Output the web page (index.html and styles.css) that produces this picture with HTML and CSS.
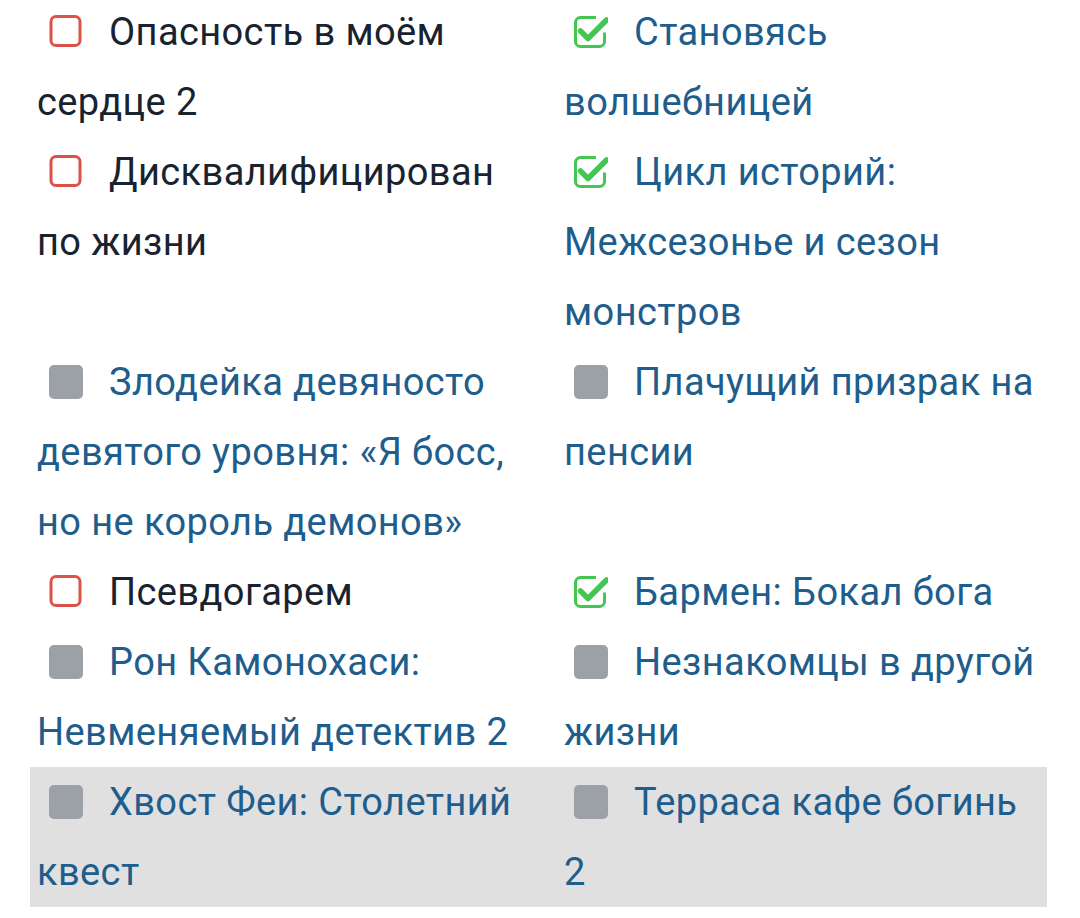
FILE: index.html
```html
<!DOCTYPE html>
<html lang="ru">
<head>
<meta charset="utf-8">
<link rel="stylesheet" href="styles.css">
</head>
<body>
<div class="page">
<table class="list">
  <tr>
    <td class="cell left"><svg class="ico" viewBox="0 0 34 34"><rect class="todo" x="2" y="1.5" width="29" height="29" rx="5"/></svg><span class="plain">Опасность в моём сердце 2</span></td>
    <td class="cell right"><svg class="ico" viewBox="0 0 34 34"><path class="done-box" d="M22 2.5H6.5a5 5 0 0 0-5 5v19a5 5 0 0 0 5 5h19a5 5 0 0 0 5-5v-9"/><path class="done-check" d="M6.5 16l7.5 7.5L32.5 5"/></svg><span class="link">Становясь волшебницей</span></td>
  </tr>
  <tr>
    <td class="cell left"><svg class="ico" viewBox="0 0 34 34"><rect class="todo" x="2" y="1.5" width="29" height="29" rx="5"/></svg><span class="plain">Дисквалифицирован по жизни</span></td>
    <td class="cell right"><svg class="ico" viewBox="0 0 34 34"><path class="done-box" d="M22 2.5H6.5a5 5 0 0 0-5 5v19a5 5 0 0 0 5 5h19a5 5 0 0 0 5-5v-9"/><path class="done-check" d="M6.5 16l7.5 7.5L32.5 5"/></svg><span class="link">Цикл историй: Межсезонье и сезон монстров</span></td>
  </tr>
  <tr>
    <td class="cell left"><svg class="ico" viewBox="0 0 34 34"><rect class="none" x="0" y="0" width="34" height="34" rx="5"/></svg><span class="link">Злодейка девяносто девятого уровня: «Я босс, но не король демонов»</span></td>
    <td class="cell right"><svg class="ico" viewBox="0 0 34 34"><rect class="none" x="0" y="0" width="34" height="34" rx="5"/></svg><span class="link">Плачущий призрак на пенсии</span></td>
  </tr>
  <tr>
    <td class="cell left"><svg class="ico" viewBox="0 0 34 34"><rect class="todo" x="2" y="1.5" width="29" height="29" rx="5"/></svg><span class="plain">Псевдогарем</span></td>
    <td class="cell right"><svg class="ico" viewBox="0 0 34 34"><path class="done-box" d="M22 2.5H6.5a5 5 0 0 0-5 5v19a5 5 0 0 0 5 5h19a5 5 0 0 0 5-5v-9"/><path class="done-check" d="M6.5 16l7.5 7.5L32.5 5"/></svg><span class="link">Бармен: Бокал бога</span></td>
  </tr>
  <tr>
    <td class="cell left"><svg class="ico" viewBox="0 0 34 34"><rect class="none" x="0" y="0" width="34" height="34" rx="5"/></svg><span class="link">Рон Камонохаси: Невменяемый детектив 2</span></td>
    <td class="cell right"><svg class="ico" viewBox="0 0 34 34"><rect class="none" x="0" y="0" width="34" height="34" rx="5"/></svg><span class="link">Незнакомцы в другой жизни</span></td>
  </tr>
  <tr class="hl">
    <td class="cell left"><svg class="ico" viewBox="0 0 34 34"><rect class="none" x="0" y="0" width="34" height="34" rx="5"/></svg><span class="link">Хвост Феи: Столетний квест</span></td>
    <td class="cell right"><svg class="ico" viewBox="0 0 34 34"><rect class="none" x="0" y="0" width="34" height="34" rx="5"/></svg><span class="link">Терраса кафе богинь 2</span></td>
  </tr>
</table>
</div>
</body>
</html>
```

FILE: styles.css
```css
html, body {
  margin: 0;
  padding: 0;
  background: #ffffff;
}

.page {
  padding-left: 30px;
  overflow: hidden;
  height: 918px;
}

.list {
  margin-top: -3px;
  border-collapse: collapse;
  border-spacing: 0;
  width: 1017px;
  table-layout: fixed;
  font-family: Roboto, "Noto Sans", sans-serif;
  font-size: 38px;
  letter-spacing: 0.4px;
  line-height: 70px;
}

.cell {
  padding: 0;
  vertical-align: top;
}

.left {
  width: 534px;
  padding: 0 20px 0 7px;
  box-sizing: border-box;
}

.right {
  width: 483px;
  padding: 0 3px 0 0;
  box-sizing: border-box;
}

.hl {
  background: #e0e0e0;
}

.ico {
  display: inline-block;
  width: 34px;
  height: 34px;
  margin-left: 12px;
  margin-right: 26px;
  vertical-align: -4px;
}

.right .ico {
  margin-left: 10px;
}

.todo {
  fill: none;
  stroke: #dc5248;
  stroke-width: 3;
}

.none {
  fill: #9ca0a7;
}

.done-box {
  fill: none;
  stroke: #43c652;
  stroke-width: 3;
}

.done-check {
  fill: none;
  stroke: #43c652;
  stroke-width: 5.5;
  stroke-linecap: round;
  stroke-linejoin: round;
}

.plain {
  color: #18232f;
}

.link {
  color: #1e5d8c;
}
```
